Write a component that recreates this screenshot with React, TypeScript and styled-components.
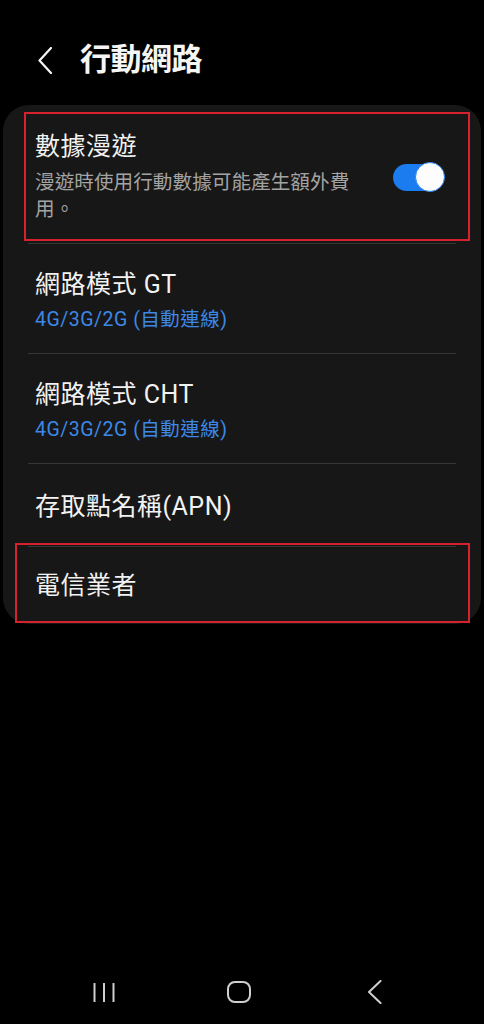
import React from "react";
import styled, { createGlobalStyle } from "styled-components";

const GlobalStyle = createGlobalStyle`
  html, body {
    margin: 0;
    padding: 0;
    background: #000;
  }
  body {
    font-family: Roboto, "Noto Sans CJK TC", "Noto Sans", sans-serif;
    -webkit-font-smoothing: antialiased;
  }
`;

const Page = styled.div`
  width: 484px;
  height: 1024px;
  display: flex;
  flex-direction: column;
  background: #000;
  overflow: hidden;
`;

const Header = styled.header`
  height: 105px;
  box-sizing: border-box;
  padding: 15px 0 0 38px;
  display: flex;
  align-items: center;
  gap: 28px;
`;

const BackButton = styled.button`
  background: none;
  border: none;
  padding: 0;
  width: 14px;
  height: 27px;
  display: flex;
  color: #f5f5f5;
`;

const Title = styled.h1`
  margin: 0;
  font-size: 31px;
  font-weight: 700;
  color: #f5f5f5;
  letter-spacing: -0.5px;
  line-height: 40px;
`;

const Card = styled.section`
  margin: 0 3px;
  background: #171717;
  border-radius: 26px;
  display: flex;
  flex-direction: column;
`;

const Row = styled.div<{ $height?: number; $top?: number; $bottom?: number }>`
  position: relative;
  box-sizing: border-box;
  display: flex;
  align-items: center;
  padding: ${(p) => p.$top ?? 0}px 36px ${(p) => p.$bottom ?? 0}px 32px;
  ${(p) => (p.$height ? `height: ${p.$height}px;` : "")}
`;

const TextCol = styled.div<{ $max?: number }>`
  display: flex;
  flex-direction: column;
  flex: 1;
  ${(p) => (p.$max ? `max-width: ${p.$max}px;` : "")}
`;

const ItemTitle = styled.div`
  font-size: 25px;
  line-height: 32px;
  letter-spacing: 0.5px;
  color: #f2f2f2;
`;

const ItemSub = styled.div<{ $accent?: boolean; $gap: number }>`
  margin-top: ${(p) => p.$gap}px;
  font-size: ${(p) => (p.$accent ? 19.5 : 19.6)}px;
  line-height: 27px;
  color: ${(p) => (p.$accent ? "#3d88e6" : "#a3a3a3")};
  letter-spacing: ${(p) => (p.$accent ? "0.5px" : "0.05px")};
`;

const Divider = styled.div`
  height: 1px;
  margin: 0 25px;
  background: #363636;
`;

const Toggle = styled.div`
  position: relative;
  width: 52px;
  height: 30px;
  margin-left: auto;
  flex-shrink: 0;
`;

const Track = styled.div`
  position: absolute;
  left: 0;
  top: 2px;
  width: 47px;
  height: 27px;
  border-radius: 14px;
  background: #1b7cf0;
`;

const Thumb = styled.div`
  position: absolute;
  right: 0;
  top: 0;
  width: 30px;
  height: 30px;
  box-sizing: border-box;
  border-radius: 50%;
  background: #fdfdfd;
  border: 1.5px solid #2a84ee;
`;

const Highlight = styled.div<{ $t: number; $l: number; $r: number; $b: number }>`
  position: absolute;
  top: ${(p) => p.$t}px;
  left: ${(p) => p.$l}px;
  right: ${(p) => p.$r}px;
  bottom: ${(p) => p.$b}px;
  border: 2.5px solid #d6222c;
  pointer-events: none;
  z-index: 2;
`;

const Spacer = styled.div`
  flex: 1;
`;

const NavBar = styled.nav`
  height: 64px;
  box-sizing: border-box;
  padding: 0 42px 0 36px;
  display: grid;
  grid-template-columns: repeat(3, 1fr);
  align-items: center;
  justify-items: center;
  color: #cfcfcf;
`;

const NavIcon = styled.svg`
  display: block;
`;

const SubRow: React.FC<{ title: string; sub: string }> = ({ title, sub }) => (
  <Row $top={25} $bottom={20}>
    <TextCol>
      <ItemTitle>{title}</ItemTitle>
      <ItemSub $accent $gap={5}>
        {sub}
      </ItemSub>
    </TextCol>
  </Row>
);

export default function App() {
  return (
    <>
      <GlobalStyle />
      <Page>
        <Header>
          <BackButton aria-label="返回">
            <svg width="14" height="27" viewBox="0 0 14 27" fill="none">
              <polyline
                points="13,1 1.5,13.5 13,26"
                stroke="currentColor"
                strokeWidth="2.2"
                strokeLinecap="round"
                strokeLinejoin="round"
              />
            </svg>
          </BackButton>
          <Title>行動網路</Title>
        </Header>

        <Card>
          <Row $top={26} $bottom={20}>
            <TextCol $max={325}>
              <ItemTitle>數據漫遊</ItemTitle>
              <ItemSub $gap={6}>漫遊時使用行動數據可能產生額外費用。</ItemSub>
            </TextCol>
            <Toggle>
              <Track />
              <Thumb />
            </Toggle>
            <Highlight $t={7} $l={21} $r={11} $b={2} />
          </Row>
          <Divider />
          <SubRow title="網路模式 GT" sub="4G/3G/2G (自動連線)" />
          <Divider />
          <SubRow title="網路模式 CHT" sub="4G/3G/2G (自動連線)" />
          <Divider />
          <Row $height={82} $top={4}>
            <ItemTitle>存取點名稱(APN)</ItemTitle>
          </Row>
          <Divider />
          <Row $height={77}>
            <ItemTitle>電信業者</ItemTitle>
            <Highlight $t={-4} $l={12} $r={11} $b={1} />
          </Row>
        </Card>

        <Spacer />

        <NavBar>
          <NavIcon width="22" height="21" viewBox="0 0 22 21" fill="none">
            <line x1="1.5" y1="1" x2="1.5" y2="20" stroke="currentColor" strokeWidth="2" />
            <line x1="11" y1="1" x2="11" y2="20" stroke="currentColor" strokeWidth="2" />
            <line x1="20.5" y1="1" x2="20.5" y2="20" stroke="currentColor" strokeWidth="2" />
          </NavIcon>
          <NavIcon width="24" height="22" viewBox="0 0 24 22" fill="none">
            <rect x="1" y="1" width="22" height="20" rx="7" stroke="currentColor" strokeWidth="2" />
          </NavIcon>
          <NavIcon width="15" height="24" viewBox="0 0 15 24" fill="none">
            <polyline
              points="13.5,1 2,12 13.5,23"
              stroke="currentColor"
              strokeWidth="2"
              strokeLinecap="round"
              strokeLinejoin="round"
            />
          </NavIcon>
        </NavBar>
      </Page>
    </>
  );
}
